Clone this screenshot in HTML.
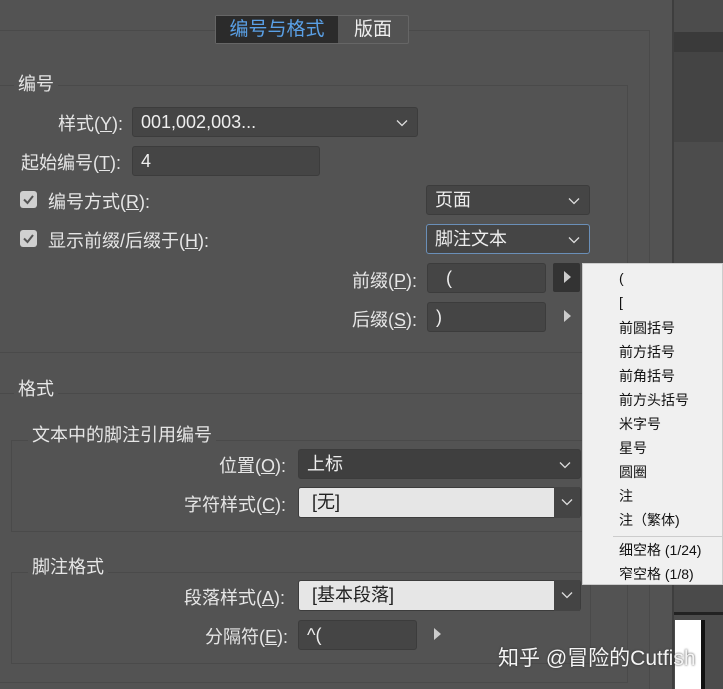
<!DOCTYPE html>
<html><head><meta charset="utf-8"><style>
*{margin:0;padding:0;box-sizing:border-box}
html,body{width:723px;height:689px;overflow:hidden}
body{background:#535353;position:relative;font-family:"Liberation Sans","Noto Sans CJK SC",sans-serif;color:#e6e6e6;font-size:17px}
.a{position:absolute;white-space:nowrap}
.ln{position:absolute;border:1px solid #4a4a4a}
.box{position:absolute;background:#454545;border:1px solid #3c3c3c;border-radius:3px;padding-left:8px;line-height:28px;color:#eee;font-size:18px}
.lt{background:#e6e6e6;color:#222}
.chev{position:absolute;right:9px;top:11px;width:12px;height:8px}
.cb{position:absolute;width:17px;height:17px;background:#d0d0d0;border-radius:3px}
.tri{position:absolute;width:0;height:0;border-top:6px solid transparent;border-bottom:6px solid transparent;border-left:7px solid #ccc}
.menu{position:absolute;left:582px;top:263px;width:141px;height:322px;background:#f0f0f0;border:1px solid #ccc}
.menu div{position:absolute;left:36px;font-size:14px;color:#111}
u{text-decoration:underline}
.db{position:absolute;right:0;top:-1px;width:26px;height:31px;background:#444}
</style></head><body>
<div class="a" style="left:672px;top:0;width:51px;height:689px;background:#4c4c4c;border-left:2px solid #3e3e3e"></div>
<div class="a" style="left:674px;top:32px;width:49px;height:20px;background:#3a3a3a"></div>
<div class="a" style="left:674px;top:52px;width:49px;height:90px;background:#444"></div>
<div class="a" style="left:674px;top:590px;width:49px;height:22px;background:#4a4a4a"></div>
<div class="a" style="left:674px;top:612px;width:49px;height:3px;background:#222"></div>
<div class="a" style="left:675px;top:620px;width:26px;height:69px;background:#fff"></div>
<div class="a" style="left:701px;top:620px;width:4px;height:69px;background:#111"></div>
<div class="ln" style="left:-2px;top:30px;width:652px;height:680px"></div>
<div class="ln" style="left:-2px;top:85px;width:630px;height:268px"></div>
<div class="ln" style="left:-2px;top:393px;width:630px;height:290px"></div>
<div class="ln" style="left:11px;top:440px;width:580px;height:92px"></div>
<div class="ln" style="left:11px;top:572px;width:580px;height:92px"></div>
<div class="a" style="left:215px;top:15px;width:194px;height:29px;border:1px solid #666;border-radius:2px;background:#535353"></div>
<div class="a" style="left:216px;top:16px;width:122px;height:27px;background:#2b2b2b;color:#5aa0e6;text-align:center;line-height:27px;font-size:19px">编号与格式</div>
<div class="a" style="left:338px;top:16px;width:70px;height:27px;color:#eee;text-align:center;line-height:27px;font-size:19px">版面</div>
<div class="a" style="left:14px;top:70px;background:#535353;padding:0 4px;font-size:18px">编号</div>
<div class="a" style="left:58px;top:110px;font-size:18px">样式(<u>Y</u>):</div>
<div class="box" style="left:132px;top:107px;width:286px;height:30px">001,002,003...<svg class="chev" viewBox="0 0 12 8"><path d="M1 1.5L6 6.5L11 1.5" stroke="#ddd" fill="none" stroke-width="1.3"/></svg></div>
<div class="a" style="left:21px;top:149px;font-size:18px">起始编号(<u>T</u>):</div>
<div class="box" style="left:132px;top:146px;width:188px;height:30px">4</div>
<div class="cb" style="left:20px;top:191px"><svg width="17" height="17"><path d="M4 8.5L7.5 12L13 5" stroke="#555" stroke-width="2" fill="none"/></svg></div>
<div class="a" style="left:48px;top:188px;font-size:18px">编号方式(<u>R</u>):</div>
<div class="box" style="left:426px;top:185px;width:164px;height:30px">页面<svg class="chev" viewBox="0 0 12 8"><path d="M1 1.5L6 6.5L11 1.5" stroke="#ddd" fill="none" stroke-width="1.3"/></svg></div>
<div class="cb" style="left:20px;top:230px"><svg width="17" height="17"><path d="M4 8.5L7.5 12L13 5" stroke="#555" stroke-width="2" fill="none"/></svg></div>
<div class="a" style="left:48px;top:227px;font-size:18px">显示前缀/后缀于(<u>H</u>):</div>
<div class="box" style="left:426px;top:224px;width:164px;height:30px;border-color:#6a8fb8">脚注文本<svg class="chev" viewBox="0 0 12 8"><path d="M1 1.5L6 6.5L11 1.5" stroke="#ddd" fill="none" stroke-width="1.3"/></svg></div>
<div class="a" style="left:352px;top:267px;font-size:18px">前缀(<u>P</u>):</div>
<div class="box" style="left:427px;top:263px;width:119px;height:30px">&nbsp;&nbsp;(</div>
<div class="a" style="left:553px;top:263px;width:27px;height:29px;background:#333;border-radius:2px"></div>
<div class="tri" style="left:564px;top:271px"></div>
<div class="a" style="left:352px;top:306px;font-size:18px">后缀(<u>S</u>):</div>
<div class="box" style="left:427px;top:302px;width:119px;height:30px">)</div>
<div class="tri" style="left:564px;top:310px"></div>
<div class="a" style="left:14px;top:375px;background:#535353;padding:0 4px;font-size:18px">格式</div>
<div class="a" style="left:28px;top:421px;background:#535353;padding:0 4px;font-size:18px">文本中的脚注引用编号</div>
<div class="a" style="left:219px;top:452px;font-size:18px">位置(<u>O</u>):</div>
<div class="box" style="left:298px;top:449px;width:283px;height:30px;background:#3f3f3f">上标<svg class="chev" viewBox="0 0 12 8"><path d="M1 1.5L6 6.5L11 1.5" stroke="#ddd" fill="none" stroke-width="1.3"/></svg></div>
<div class="a" style="left:184px;top:491px;font-size:18px">字符样式(<u>C</u>):</div>
<div class="box lt" style="left:298px;top:487px;width:283px;height:31px">&nbsp;[无]<span class="db"><svg class="chev" style="right:7px" viewBox="0 0 12 8"><path d="M1 1.5L6 6.5L11 1.5" stroke="#ddd" fill="none" stroke-width="1.3"/></svg></span></div>
<div class="a" style="left:28px;top:553px;background:#535353;padding:0 4px;font-size:18px">脚注格式</div>
<div class="a" style="left:184px;top:584px;font-size:18px">段落样式(<u>A</u>):</div>
<div class="box lt" style="left:298px;top:580px;width:283px;height:31px">&nbsp;[基本段落]<span class="db"><svg class="chev" style="right:7px" viewBox="0 0 12 8"><path d="M1 1.5L6 6.5L11 1.5" stroke="#ddd" fill="none" stroke-width="1.3"/></svg></span></div>
<div class="a" style="left:205px;top:623px;font-size:18px">分隔符(<u>E</u>):</div>
<div class="box" style="left:298px;top:620px;width:119px;height:30px">^(</div>
<div class="tri" style="left:434px;top:628px"></div>
<div class="menu">
<div style="top:6px">(</div><div style="top:30px">[</div><div style="top:54px">前圆括号</div><div style="top:78px">前方括号</div><div style="top:102px">前角括号</div><div style="top:126px">前方头括号</div><div style="top:150px">米字号</div><div style="top:174px">星号</div><div style="top:198px">圆圈</div><div style="top:222px">注</div><div style="top:246px">注（繁体)</div>
<span style="position:absolute;left:30px;top:272px;width:111px;border-top:1px solid #ccc"></span>
<div style="top:276px">细空格 (1/24)</div><div style="top:300px">窄空格 (1/8)</div>
</div>
<div class="a" style="left:498px;top:642px;font-size:21px;color:#f4f4f4;text-shadow:0 0 2px #333">知乎 @冒险的Cutfish</div>
</body></html>
